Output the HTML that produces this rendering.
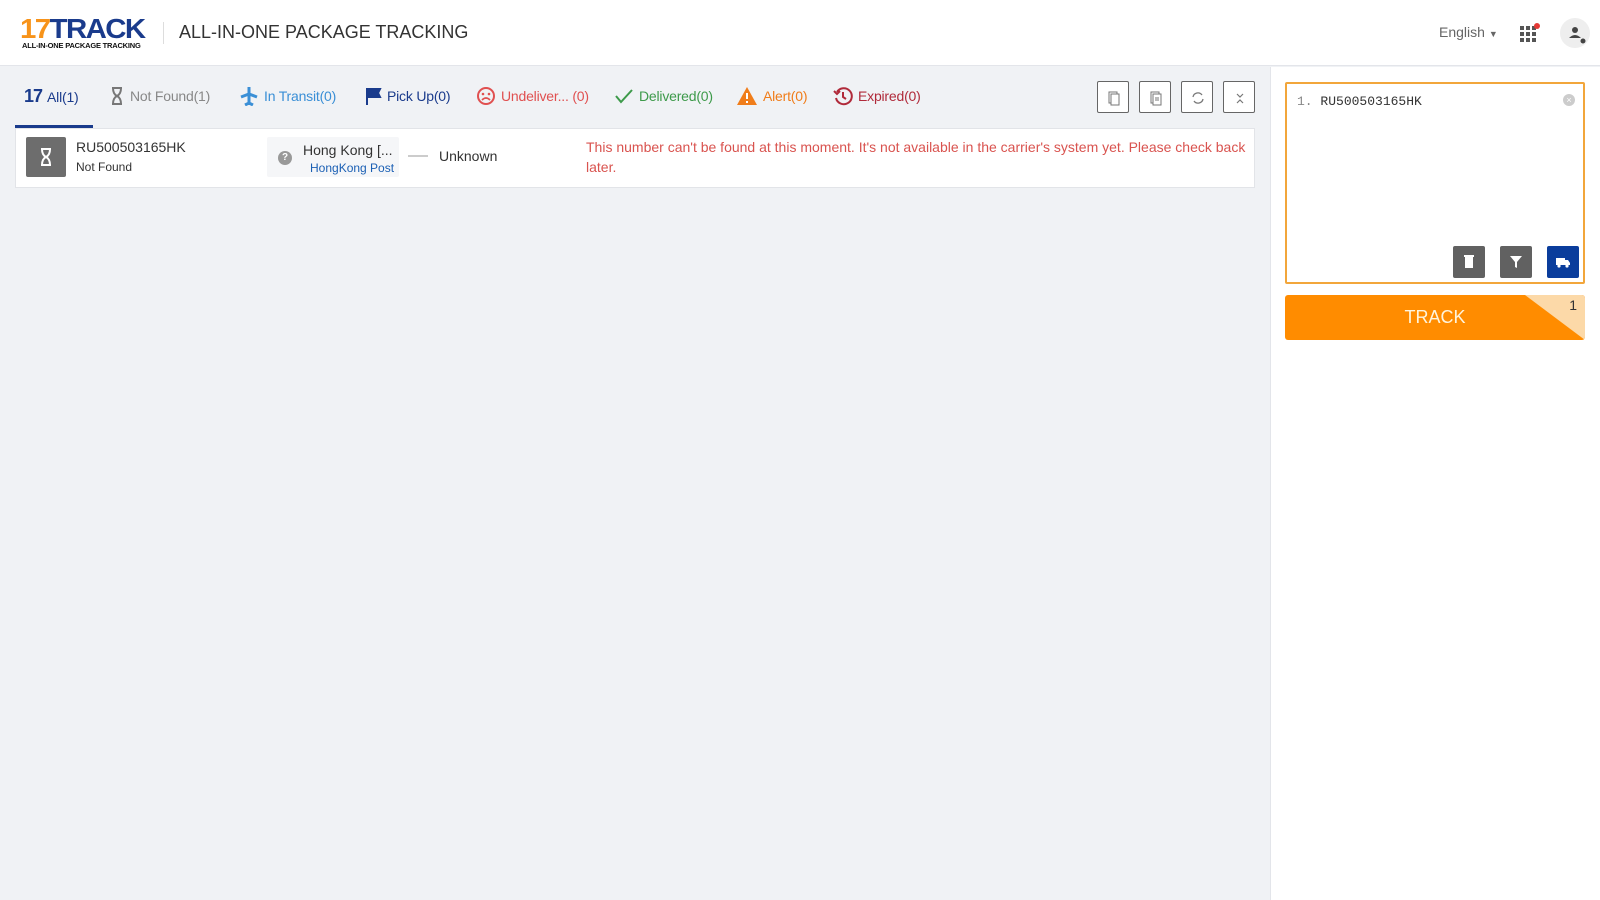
<!DOCTYPE html>
<html><head><meta charset="utf-8"><style>
*{box-sizing:border-box;margin:0;padding:0}
body{width:1600px;height:900px;overflow:hidden;background:#f0f2f5;font-family:"Liberation Sans",Arial,sans-serif;position:relative}
.hdr{position:absolute;left:0;top:0;width:1600px;height:66px;background:#fff;border-bottom:1px solid #e3e5ea}
.logo{position:absolute;left:20px;top:13px;font-weight:bold;font-size:28px;letter-spacing:-1.5px;color:#1a3b8c;transform:scaleX(1.05);transform-origin:left}
.logo b{color:#f7931a}
.logosub{position:absolute;left:22px;top:41px;font-size:7.5px;font-weight:bold;color:#111;letter-spacing:-.2px}
.sep{position:absolute;left:163px;top:22px;width:1px;height:22px;background:#ddd}
.title{position:absolute;left:179px;top:22px;font-size:18px;color:#333}
.tab{position:absolute;top:86px;font-size:14px;white-space:nowrap;display:flex;align-items:center;gap:5px;letter-spacing:-.2px}
.ul{position:absolute;left:15px;top:125px;width:78px;height:3px;background:#1a3b8c}
.btn{position:absolute;top:81px;width:32px;height:32px;border:1px solid #666;border-radius:2px;background:#fff}
.row{position:absolute;left:15px;top:128px;width:1240px;height:60px;background:#fff;border:1px solid #e2e4e8}
.rp{position:absolute;left:1270px;top:67px;width:330px;height:833px;background:#fff;border-left:1px solid #e3e5ea}
.ta{position:absolute;left:1285px;top:82px;width:300px;height:202px;border:2px solid #f2a63b;border-radius:2px;background:#fff}
.track{position:absolute;left:1285px;top:295px;width:300px;height:45px;background:#ff8c00;border-radius:3px;color:#fff4dc;font-size:18px;text-align:center;line-height:45px;overflow:hidden}
.sb{position:absolute;top:246px;width:32px;height:32px;background:#616161;border-radius:2px}
</style></head><body>
<div class="hdr">
<div class="logo"><b>17</b>TRACK</div>
<div class="logosub">ALL-IN-ONE PACKAGE TRACKING</div>
<div class="sep"></div>
<div class="title">ALL-IN-ONE PACKAGE TRACKING</div>
<div style="position:absolute;left:1439px;top:24px;font-size:14px;color:#666">English <span style="font-size:9px">▼</span></div>
<svg style="position:absolute;left:1520px;top:23px" width="22" height="20"><g fill="#555"><rect x="0" y="3" width="4" height="4"/><rect x="6" y="3" width="4" height="4"/><rect x="12" y="3" width="4" height="4"/><rect x="0" y="9" width="4" height="4"/><rect x="6" y="9" width="4" height="4"/><rect x="12" y="9" width="4" height="4"/><rect x="0" y="15" width="4" height="4"/><rect x="6" y="15" width="4" height="4"/><rect x="12" y="15" width="4" height="4"/></g><circle cx="17" cy="3" r="3" fill="#e53935"/></svg>
<div style="position:absolute;left:1560px;top:18px;width:30px;height:30px;border-radius:50%;background:#eee"></div>
<svg style="position:absolute;left:1568px;top:25px" width="20" height="20"><circle cx="7" cy="5" r="3" fill="#444"/><path d="M1 13q6-6 12 0z" fill="#444"/><circle cx="15" cy="16" r="2.5" fill="#444"/></svg>
</div>

<div class="tab" style="left:24px;color:#1a3b8c"><b style="font-size:18px;letter-spacing:-1px">17</b><span>All(1)</span></div>
<div class="tab" style="left:109px;color:#888"><svg width="16" height="20"><path d="M3 2h10M3 18h10M4 2q0 6 4 8q-4 2-4 8M12 2q0 6-4 8q4 2 4 8" stroke="#777" stroke-width="2" fill="none"/></svg><span>Not Found(1)</span></div>
<div class="tab" style="left:239px;color:#3a8fd6"><svg width="20" height="20"><path d="M10 1v18M2 11l8-3 8 3M6 19l4-2 4 2" stroke="#3a8fd6" stroke-width="3" fill="none"/></svg><span>In Transit(0)</span></div>
<div class="tab" style="left:364px;color:#1a3b8c"><svg width="18" height="20"><path d="M3 19V3h13l-2 4 2 4H4" fill="#1a3b8c" stroke="#1a3b8c" stroke-width="2"/></svg><span>Pick Up(0)</span></div>
<div class="tab" style="left:476px;color:#e05050"><svg width="20" height="20"><circle cx="10" cy="10" r="8" stroke="#e05050" stroke-width="2" fill="none"/><circle cx="7" cy="8" r="1.3" fill="#e05050"/><circle cx="13" cy="8" r="1.3" fill="#e05050"/><path d="M6 14q4-4 8 0" stroke="#e05050" stroke-width="1.6" fill="none"/></svg><span>Undeliver... (0)</span></div>
<div class="tab" style="left:614px;color:#3d9a4a"><svg width="20" height="20"><path d="M2 10l5 6L18 4" stroke="#3d9a4a" stroke-width="2" fill="none"/></svg><span>Delivered(0)</span></div>
<div class="tab" style="left:736px;color:#f07d1a"><svg width="22" height="20"><path d="M11 1L21 19H1z" fill="#f07d1a"/><path d="M11 7v6M11 15v2" stroke="#fff" stroke-width="2"/></svg><span>Alert(0)</span></div>
<div class="tab" style="left:833px;color:#b02a3a"><svg width="20" height="20"><path d="M4 6A8 8 0 1 1 3 12" stroke="#b02a3a" stroke-width="2" fill="none"/><path d="M1 5l3 3 3-3" stroke="#b02a3a" stroke-width="2" fill="none"/><path d="M10 6v5l3 2" stroke="#b02a3a" stroke-width="2" fill="none"/></svg><span>Expired(0)</span></div>
<div class="ul"></div>

<div class="btn" style="left:1097px"><svg width="32" height="32"><rect x="11" y="10" width="8" height="11" stroke="#777" fill="#fff"/><rect x="13" y="12" width="8" height="11" stroke="#777" fill="#fff"/></svg></div>
<div class="btn" style="left:1139px"><svg width="32" height="32"><rect x="11" y="10" width="8" height="11" stroke="#777" fill="#fff"/><rect x="13" y="12" width="8" height="11" stroke="#777" fill="#fff"/><path d="M15 16h4M15 18h4" stroke="#777"/></svg></div>
<div class="btn" style="left:1181px"><svg width="32" height="32"><path d="M11 15a5 5 0 0 1 9-2M21 17a5 5 0 0 1-9 2" stroke="#777" stroke-width="1.3" fill="none"/></svg></div>
<div class="btn" style="left:1223px"><svg width="32" height="32"><path d="M13 12l3 3 3-3M13 21l3-3 3 3" stroke="#777" stroke-width="1.2" fill="none"/></svg></div>

<div class="row">
<div style="position:absolute;left:10px;top:8px;width:40px;height:40px;background:#6d6d6d;border-radius:2px"><svg width="40" height="40"><path d="M15 12h10M15 28h10M16 12q0 6 4 8q-4 2-4 8M24 12q0 6-4 8q4 2 4 8" stroke="#fff" stroke-width="2" fill="none"/></svg></div>
<div style="position:absolute;left:60px;top:10px;font-size:14px;color:#333">RU500503165HK</div>
<div style="position:absolute;left:60px;top:31px;font-size:12px;color:#333">Not Found</div>
<div style="position:absolute;left:251px;top:8px;width:132px;height:40px;background:#f5f6f8;border-radius:2px">
<div style="position:absolute;left:11px;top:14px;width:14px;height:14px;border-radius:50%;background:#999;color:#fff;font-size:10px;text-align:center;line-height:14px;font-weight:bold">?</div>
<div style="position:absolute;left:36px;top:5px;font-size:14px;color:#333">Hong Kong [...</div>
<div style="position:absolute;left:43px;top:24px;font-size:12px;color:#1a5fb4">HongKong Post</div></div>
<div style="position:absolute;left:392px;top:26px;width:20px;height:2px;background:#ccc"></div>
<div style="position:absolute;left:423px;top:19px;font-size:14px;color:#333">Unknown</div>
<div style="position:absolute;left:570px;top:8px;width:660px;font-size:14px;color:#d9534f;line-height:20px">This number can't be found at this moment. It's not available in the carrier's system yet. Please check back later.</div>
</div>

<div class="rp"></div>
<div class="ta">
<div style="position:absolute;left:10px;top:10px;font-family:'Liberation Mono',monospace;font-size:13px;color:#333"><span style="color:#888">1.</span> RU500503165HK</div>
<div style="position:absolute;right:8px;top:10px;width:12px;height:12px;border-radius:50%;background:#ccc;color:#fff;font-size:9px;text-align:center;line-height:12px">×</div>
</div>
<div class="sb" style="left:1453px"><svg width="32" height="32"><rect x="12" y="11" width="8" height="11" fill="#fff"/><rect x="11" y="9" width="10" height="2" fill="#fff"/></svg></div>
<div class="sb" style="left:1500px"><svg width="32" height="32"><path d="M10 10h12l-5 6v6l-2-1v-5z" fill="#fff"/></svg></div>
<div class="sb" style="left:1547px;background:#0a3d9c"><svg width="32" height="32"><rect x="9" y="12" width="9" height="7" fill="#fff"/><path d="M18 14h3l2 3v2h-5z" fill="#fff"/><circle cx="12" cy="20" r="1.6" fill="#fff"/><circle cx="20" cy="20" r="1.6" fill="#fff"/></svg></div>
<div class="track">TRACK
<svg style="position:absolute;right:0;top:0" width="60" height="45"><path d="M0 0H60V45z" fill="#fcd9a8"/></svg>
<span style="position:absolute;right:8px;top:-12px;font-size:14px;color:#333">1</span></div>
</body></html>
